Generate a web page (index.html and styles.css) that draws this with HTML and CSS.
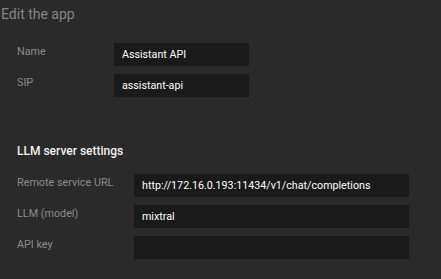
FILE: index.html
```html
<!DOCTYPE html>
<html>
<head>
<meta charset="utf-8">
<link rel="stylesheet" href="styles.css">
</head>
<body>
<div class="page">
  <h1 class="title">Edit the app</h1>
  <div class="form form-main">
    <div class="row"><span class="label">Name</span><div class="input">Assistant API</div></div>
    <div class="row"><span class="label">SIP</span><div class="input">assistant-api</div></div>
  </div>
  <h2 class="section">LLM server settings</h2>
  <div class="form form-llm">
    <div class="row"><span class="label">Remote service URL</span><div class="input">http://172.16.0.193:11434/v1/chat/completions</div></div>
    <div class="row"><span class="label">LLM (model)</span><div class="input">mixtral</div></div>
    <div class="row"><span class="label">API key</span><div class="input"></div></div>
  </div>
</div>
</body>
</html>
```
FILE: styles.css
```css
html, body {
  margin: 0;
  padding: 0;
  background: #2a2a2a;
  font-family: "Roboto", "Liberation Sans", sans-serif;
}
.page {
  width: 441px;
  height: 279px;
  overflow: hidden;
}
.title {
  margin: 0;
  padding: 4px 0 0 1px;
  font-size: 14px;
  line-height: 20px;
  font-weight: 400;
  color: #858585;
}
.form {
  display: flex;
  flex-direction: column;
  gap: 8px;
  padding-left: 17px;
}
.form-main {
  margin-top: 19px;
}
.row {
  display: grid;
  align-items: start;
}
.form-main .row { grid-template-columns: 97px 135px; }
.form-llm .row { grid-template-columns: 117px 275px; }
.label {
  font-size: 10.8px;
  line-height: 14px;
  color: #8a8a8a;
  padding-top: 2px;
}
.input {
  height: 23px;
  box-sizing: border-box;
  background: #1a1a1a;
  color: #ffffff;
  font-size: 10.7px;
  line-height: 23px;
  padding-left: 8px;
  white-space: nowrap;
  overflow: hidden;
}
.section {
  margin: 46px 0 0 17px;
  font-size: 12px;
  line-height: 16px;
  font-weight: 500;
  color: #f0f0f0;
}
.form-llm {
  margin-top: 15px;
}
```
